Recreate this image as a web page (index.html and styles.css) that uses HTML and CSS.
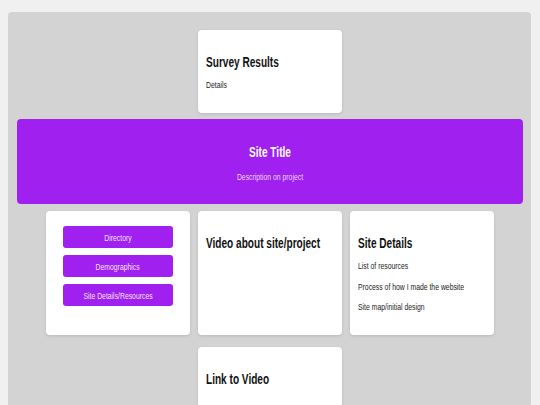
FILE: index.html
```html
<!DOCTYPE html>
<html>
<head>
<meta charset="utf-8">
<link rel="stylesheet" href="styles.css">
</head>
<body>
<div class="page">
  <section class="card card-survey">
    <h2 class="card-title">Survey Results</h2>
    <p class="card-text">Details</p>
  </section>
  <header class="banner">
    <h1 class="banner-title">Site Title</h1>
    <p class="banner-text">Description on project</p>
  </header>
  <div class="row">
    <nav class="card card-nav">
      <a class="nav-btn"><span class="nav-label">Directory</span></a>
      <a class="nav-btn"><span class="nav-label">Demographics</span></a>
      <a class="nav-btn"><span class="nav-label">Site Details/Resources</span></a>
    </nav>
    <section class="card">
      <h2 class="card-title">Video about site/project</h2>
    </section>
    <section class="card">
      <h2 class="card-title">Site Details</h2>
      <p class="card-text list-item">List of resources</p>
      <p class="card-text list-item">Process of how I made the website</p>
      <p class="card-text list-item">Site map/initial design</p>
    </section>
  </div>
  <div class="row row-bottom">
    <section class="card card-link">
      <h2 class="card-title">Link to Video</h2>
    </section>
  </div>
</div>
</body>
</html>
```
FILE: styles.css
```css
html, body {
  margin: 0;
  padding: 0;
  height: 100%;
}
body {
  background: #f0f0f0;
  font-family: "Liberation Sans", Arial, sans-serif;
  padding: 12px 9px 0 8px;
  box-sizing: border-box;
  overflow: hidden;
}
.page {
  background: #d3d3d3;
  border-radius: 4px 4px 0 0;
  padding: 18px 8px 20px 9px;
  display: flex;
  flex-direction: column;
  align-items: center;
  min-height: 420px;
  box-sizing: border-box;
}
.card {
  background: #fff;
  border-radius: 4px;
  box-shadow: 0 1px 3px rgba(0,0,0,0.12);
  width: 144px;
  box-sizing: border-box;
  padding: 24px 8px 0 8px;
}
.card-title {
  margin: 0;
  font-size: 14px;
  line-height: 16px;
  font-weight: bold;
  color: #111;
  white-space: nowrap;
  transform: scaleX(0.72);
  transform-origin: left center;
}
.card-text {
  margin: 0;
  font-size: 9.5px;
  line-height: 12px;
  color: #222;
  white-space: nowrap;
  transform: scaleX(0.72);
  transform-origin: left center;
}
.card-survey {
  height: 83px;
}
.card-survey .card-text {
  margin-top: 9px;
}
.banner {
  margin-top: 6px;
  align-self: stretch;
  height: 85px;
  background: #a020f0;
  border-radius: 4px;
  text-align: center;
  box-sizing: border-box;
  padding-top: 25px;
}
.banner-title {
  margin: 0;
  font-size: 14px;
  line-height: 16px;
  font-weight: bold;
  color: #fff;
  transform: scaleX(0.72);
}
.banner-text {
  margin: 11px 0 0 0;
  font-size: 9.5px;
  line-height: 12px;
  color: #eed6ff;
  transform: scaleX(0.72);
}
.row {
  margin-top: 7px;
  display: flex;
  gap: 8px;
}
.row .card {
  height: 124px;
}
.row-bottom {
  margin-top: 12px;
}
.row-bottom .card {
  height: 70px;
}
.card-nav {
  padding: 15px 17px 0 17px;
  display: flex;
  flex-direction: column;
  gap: 7px;
}
.nav-btn {
  display: block;
  height: 22px;
  line-height: 20px;
  background: #a020f0;
  border-radius: 3px;
  text-align: center;
  white-space: nowrap;
}
.nav-label {
  display: inline-block;
  color: #f3e2ff;
  font-size: 9.5px;
  transform: scaleX(0.72);
}
.list-item {
  margin-top: 8.5px;
}
.card-title + .list-item {
  margin-top: 9px;
}
```
